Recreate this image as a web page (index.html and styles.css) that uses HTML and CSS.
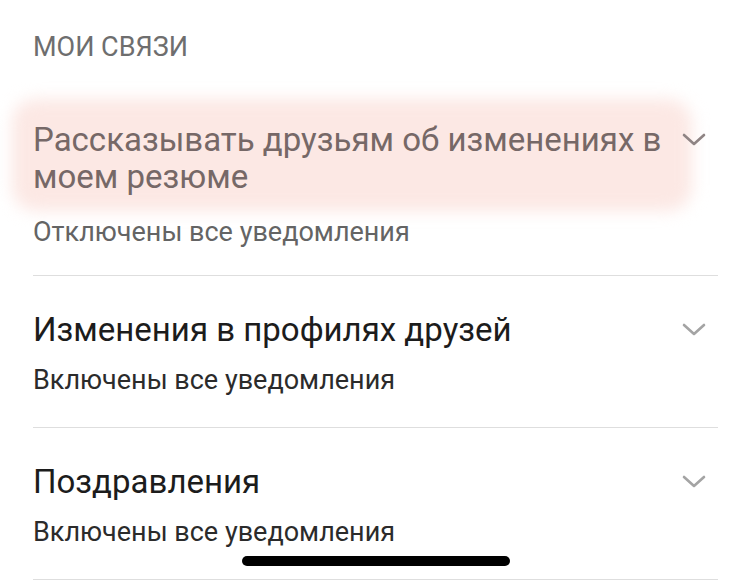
FILE: index.html
```html
<!DOCTYPE html>
<html lang="ru">
<head>
  <meta charset="UTF-8">
  <meta name="viewport" content="width=device-width, initial-scale=1.0">
  <title>Мои связи</title>
  <link rel="stylesheet" href="styles.css">
</head>
<body>
  <div class="page">
    <div class="section-title">МОИ СВЯЗИ</div>

    <div class="item item-marked">
      <div class="item-head">
        <div class="item-title">Рассказывать друзьям об изменениях в моем резюме</div>
        <svg class="chevron" width="24" height="14" viewBox="0 0 24 14"><polyline points="2,2 12,11 22,2" fill="none" stroke-width="2.6" stroke-linecap="round" stroke-linejoin="round"/></svg>
      </div>
      <div class="item-sub">Отключены все уведомления</div>
    </div>

    <div class="item">
      <div class="item-head">
        <div class="item-title">Изменения в профилях друзей</div>
        <svg class="chevron" width="24" height="14" viewBox="0 0 24 14"><polyline points="2,2 12,11 22,2" fill="none" stroke-width="2.6" stroke-linecap="round" stroke-linejoin="round"/></svg>
      </div>
      <div class="item-sub">Включены все уведомления</div>
    </div>

    <div class="item">
      <div class="item-head">
        <div class="item-title">Поздравления</div>
        <svg class="chevron" width="24" height="14" viewBox="0 0 24 14"><polyline points="2,2 12,11 22,2" fill="none" stroke-width="2.6" stroke-linecap="round" stroke-linejoin="round"/></svg>
      </div>
      <div class="item-sub">Включены все уведомления</div>
    </div>
  </div>
  <div class="home-indicator"></div>
</body>
</html>
```

FILE: styles.css
```css
body {
  margin: 0;
  background: #fff;
  font-family: Roboto, "Liberation Sans", sans-serif;
  overflow: hidden;
}
.page {
  padding: 30px 32px 0 33px;
}
.section-title {
  font-size: 27px;
  line-height: 34px;
  color: #6e6e6e;
  margin-bottom: 22px;
}
.item {
  padding: 35px 0 30px;
  border-bottom: 1px solid #dedede;
}
.item-head {
  display: flex;
  align-items: flex-start;
}
.item-title {
  flex: 1;
  font-size: 33px;
  line-height: 37px;
  color: #1c1c1c;
  padding-right: 16px;
}
.chevron {
  flex: none;
  margin: 12px 12px 0 0;
  stroke: #a4a4a4;
}
.item-sub {
  margin-top: 15px;
  font-size: 27px;
  line-height: 34px;
  color: #2b2b2b;
}

/* выделенный пункт */
.item-marked {
  position: relative;
  z-index: 0;
  padding-bottom: 26px;
}
.item-marked::before {
  content: "";
  position: absolute;
  z-index: -1;
  left: -21px;
  top: 13px;
  width: 680px;
  height: 112px;
  border-radius: 24px;
  background: #fce8e4;
  filter: blur(8px);
}
.item-marked .item-title {
  color: #766867;
}
.item-marked .chevron {
  stroke: #8f8484;
}
.item-marked .item-sub {
  margin-top: 20px;
  color: #646464;
}

.home-indicator {
  position: fixed;
  left: 242px;
  top: 556px;
  width: 268px;
  height: 10px;
  border-radius: 5px;
  background: #000;
}
```
